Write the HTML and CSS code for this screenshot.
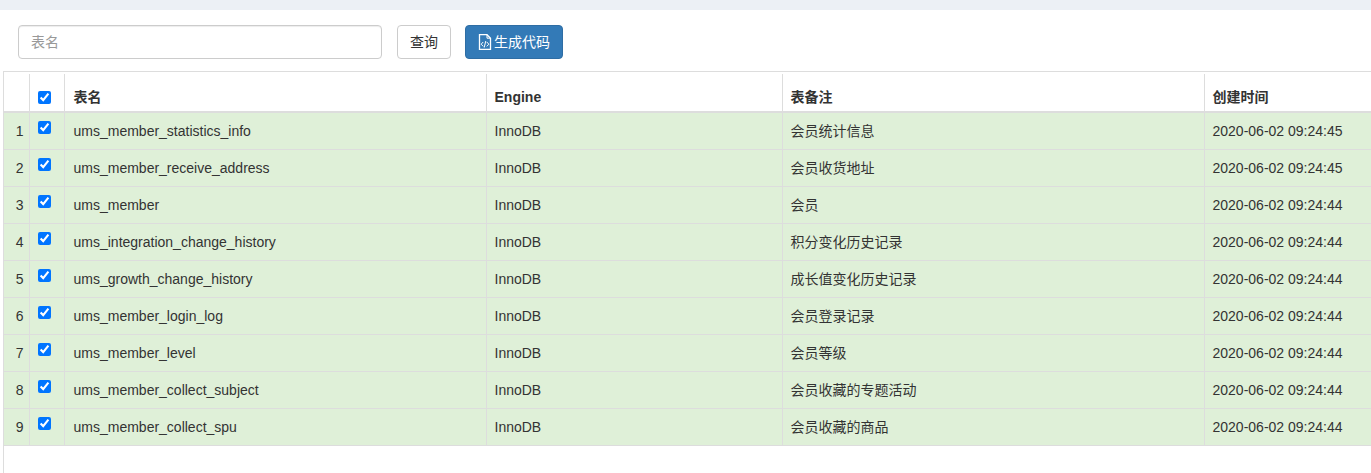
FILE: index.html
```html
<!DOCTYPE html>
<html>
<head>
    <title>生成代码</title>
    <link rel="stylesheet" href="styles.css">
</head>
<body>
    <div class="top-bar"></div>
    <div class="search-form">
        <input type="text" class="form-input" placeholder="表名">
        <button class="btn">查询</button>
        <button class="btn btn-primary">
            <svg class="icon" viewBox="0 0 14 16" width="14" height="16">
                <path d="M1.500 .7h7.500l3.500 3.500v11.100h-11z" fill="none" stroke="#fff" stroke-width="1.300"/>
                <path d="M9 .7v3.500h3.500" fill="none" stroke="#fff"/>
                <path d="M5.200 8l-2 2.200 2 2.200M8.800 8l2 2.200-2 2.200M7.800 7l-1.600 6.500" fill="none" stroke="#fff" stroke-width="1"/>
            </svg>生成代码
        </button>
    </div>
    <div class="table-wrap">
        <table class="data-table">
            <colgroup>
                <col class="col-no"><col class="col-check"><col class="col-name">
                <col class="col-engine"><col class="col-remark"><col class="col-time">
            </colgroup>
            <thead>
                <tr>
                    <th></th>
                    <th><input type="checkbox" checked></th>
                    <th>表名</th>
                    <th>Engine</th>
                    <th>表备注</th>
                    <th>创建时间</th>
                </tr>
            </thead>
            <tbody>
                <tr><td class="no">1</td><td><input type="checkbox" checked></td><td>ums_member_statistics_info</td><td>InnoDB</td><td>会员统计信息</td><td>2020-06-02 09:24:45</td></tr>
                <tr><td class="no">2</td><td><input type="checkbox" checked></td><td>ums_member_receive_address</td><td>InnoDB</td><td>会员收货地址</td><td>2020-06-02 09:24:45</td></tr>
                <tr><td class="no">3</td><td><input type="checkbox" checked></td><td>ums_member</td><td>InnoDB</td><td>会员</td><td>2020-06-02 09:24:44</td></tr>
                <tr><td class="no">4</td><td><input type="checkbox" checked></td><td>ums_integration_change_history</td><td>InnoDB</td><td>积分变化历史记录</td><td>2020-06-02 09:24:44</td></tr>
                <tr><td class="no">5</td><td><input type="checkbox" checked></td><td>ums_growth_change_history</td><td>InnoDB</td><td>成长值变化历史记录</td><td>2020-06-02 09:24:44</td></tr>
                <tr><td class="no">6</td><td><input type="checkbox" checked></td><td>ums_member_login_log</td><td>InnoDB</td><td>会员登录记录</td><td>2020-06-02 09:24:44</td></tr>
                <tr><td class="no">7</td><td><input type="checkbox" checked></td><td>ums_member_level</td><td>InnoDB</td><td>会员等级</td><td>2020-06-02 09:24:44</td></tr>
                <tr><td class="no">8</td><td><input type="checkbox" checked></td><td>ums_member_collect_subject</td><td>InnoDB</td><td>会员收藏的专题活动</td><td>2020-06-02 09:24:44</td></tr>
                <tr><td class="no">9</td><td><input type="checkbox" checked></td><td>ums_member_collect_spu</td><td>InnoDB</td><td>会员收藏的商品</td><td>2020-06-02 09:24:44</td></tr>
            </tbody>
        </table>
    </div>
</body>
</html>
```

FILE: styles.css
```css
html, body {
    height: 100%;
}
body {
    margin: 0;
    overflow: hidden;
    background: #fff;
    color: #333;
    font-family: "Liberation Sans", "Noto Sans CJK SC", sans-serif;
    font-size: 14px;
    line-height: 20px;
}
.top-bar {
    height: 10px;
    background: #ecf0f5;
}
.search-form {
    display: flex;
    align-items: center;
    height: 34px;
    padding: 15px 0 12px 18px;
}
.form-input {
    box-sizing: border-box;
    width: 364px;
    height: 34px;
    padding: 6px 12px;
    margin-right: 15px;
    border: 1px solid #ccc;
    border-radius: 4px;
    font: inherit;
    color: #555;
    box-shadow: inset 0 1px 1px rgba(0,0,0,.075);
}
.form-input::placeholder {
    color: #999;
}
.btn {
    box-sizing: border-box;
    height: 34px;
    padding: 6px 12px;
    margin-right: 14px;
    border: 1px solid #ccc;
    border-radius: 4px;
    background: #fff;
    color: #333;
    font: inherit;
}
.btn-primary {
    display: flex;
    align-items: center;
    background: #337ab7;
    border-color: #2e6da4;
    color: #fff;
}
.icon {
    margin-right: 2px;
}
.table-wrap {
    box-sizing: border-box;
    width: 1368px;
    height: 402px;
    margin-left: 3px;
    padding-top: 2px;
    border-top: 1px solid #ddd;
    border-left: 1px solid #ddd;
    overflow: hidden;
}
.data-table {
    table-layout: fixed;
    width: 1429px;
    border-collapse: collapse;
}
.col-no { width: 25px; }
.col-check { width: 35px; }
.col-name { width: 422px; }
.col-engine { width: 296px; }
.col-remark { width: 422px; }
.col-time { width: 229px; }
.data-table th,
.data-table td {
    box-sizing: border-box;
    padding: 8px 8px 8px 8px;
    text-align: left;
    vertical-align: middle;
    border-left: 1px solid #ddd;
}
.data-table th:first-child,
.data-table td:first-child {
    border-left: 0;
}
.data-table th {
    height: 38px;
    padding-top: 12px;
    padding-bottom: 4px;
    border-bottom: 2px solid #ddd;
    font-weight: bold;
}
.data-table td {
    height: 37px;
    background: #dff0d8;
    border-top: 1px solid #ddd;
    border-bottom: 1px solid #ddd;
}
.data-table th:nth-child(3),
.data-table td:nth-child(3) {
    padding-left: 9px;
}
.data-table td.no {
    padding: 8px 5px 8px 0;
    text-align: right;
}
.data-table input[type="checkbox"] {
    display: block;
    width: 13px;
    height: 13px;
    margin: 0;
}
.data-table th input[type="checkbox"] {
    margin-top: 1px;
}
.data-table td input[type="checkbox"] {
    margin-top: -8px;
}
```
